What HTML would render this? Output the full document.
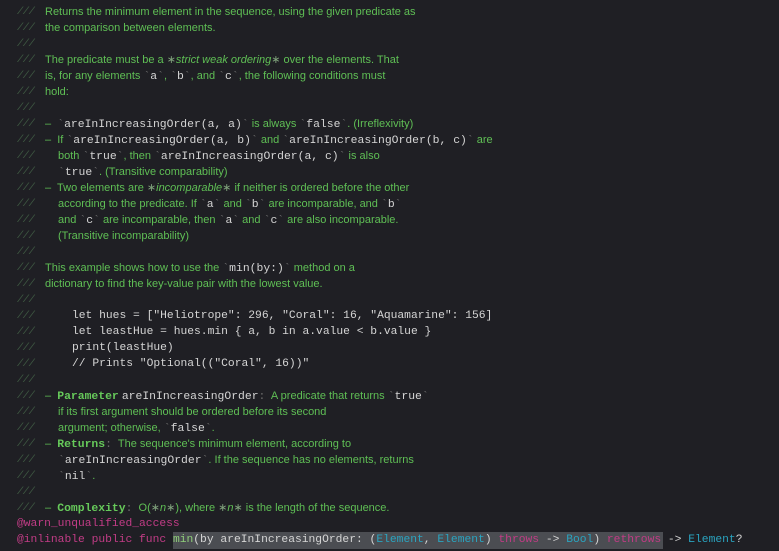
<!DOCTYPE html>
<html><head><meta charset="utf-8"><style>
html,body{margin:0;padding:0;background:#1f1f24;width:779px;height:551px;overflow:hidden}
.l{position:absolute;height:16px;line-height:16px;white-space:pre;font-family:"Liberation Sans",sans-serif;font-size:11px;color:#5fbf55}
.p{position:absolute;left:17px;height:16px;line-height:16px;font-family:"Liberation Mono",monospace;font-size:10.5px;color:#3f5a43;font-style:italic;letter-spacing:-0.5px}
.m{font-family:"Liberation Mono",monospace;font-size:11.4px;color:#d5d5d5}
.t{color:#6b6b6b;font-family:"Liberation Mono",monospace;font-size:11.4px}
.b{font-family:"Liberation Mono",monospace;font-size:11.4px;font-weight:bold;color:#66c95a}
.c{font-family:"Liberation Mono",monospace;font-size:11.3px;color:#d5d5d5}
.i{font-style:italic}
.s{color:#7fa17b}
.k{font-family:"Liberation Mono",monospace;font-size:11.3px;color:#d5d5d5}
.pk{color:#c23c86}.ty{color:#2aa4c0}
</style></head><body>
<div class="p" style="top:4px">///</div><div class="l" style="top:4px;left:45px">Returns the minimum element in the sequence, using the given predicate as</div>
<div class="p" style="top:20px">///</div><div class="l" style="top:20px;left:45px">the comparison between elements.</div>
<div class="p" style="top:36px">///</div>
<div class="p" style="top:52px">///</div><div class="l" style="top:52px;left:45px">The predicate must be a <span class="s">∗</span><span class="i">strict weak ordering</span><span class="s">∗</span> over the elements. That</div>
<div class="p" style="top:68px">///</div><div class="l" style="top:68px;left:45px">is, for any elements <span class="t">`</span><span class="m">a</span><span class="t">`</span>, <span class="t">`</span><span class="m">b</span><span class="t">`</span>, and <span class="t">`</span><span class="m">c</span><span class="t">`</span>, the following conditions must</div>
<div class="p" style="top:84px">///</div><div class="l" style="top:84px;left:45px">hold:</div>
<div class="p" style="top:100px">///</div>
<div class="p" style="top:116px">///</div><div class="l" style="top:116px;left:45px">–  <span class="t">`</span><span class="m">areInIncreasingOrder(a, a)</span><span class="t">`</span> is always <span class="t">`</span><span class="m">false</span><span class="t">`</span>. (Irreflexivity)</div>
<div class="p" style="top:132px">///</div><div class="l" style="top:132px;left:45px">–  If <span class="t">`</span><span class="m">areInIncreasingOrder(a, b)</span><span class="t">`</span> and <span class="t">`</span><span class="m">areInIncreasingOrder(b, c)</span><span class="t">`</span> are</div>
<div class="p" style="top:148px">///</div><div class="l" style="top:148px;left:58px">both <span class="t">`</span><span class="m">true</span><span class="t">`</span>, then <span class="t">`</span><span class="m">areInIncreasingOrder(a, c)</span><span class="t">`</span> is also</div>
<div class="p" style="top:164px">///</div><div class="l" style="top:164px;left:58px"><span class="t">`</span><span class="m">true</span><span class="t">`</span>. (Transitive comparability)</div>
<div class="p" style="top:180px">///</div><div class="l" style="top:180px;left:45px">–  Two elements are <span class="s">∗</span><span class="i">incomparable</span><span class="s">∗</span> if neither is ordered before the other</div>
<div class="p" style="top:196px">///</div><div class="l" style="top:196px;left:58px">according to the predicate. If <span class="t">`</span><span class="m">a</span><span class="t">`</span> and <span class="t">`</span><span class="m">b</span><span class="t">`</span> are incomparable, and <span class="t">`</span><span class="m">b</span><span class="t">`</span></div>
<div class="p" style="top:212px">///</div><div class="l" style="top:212px;left:58px">and <span class="t">`</span><span class="m">c</span><span class="t">`</span> are incomparable, then <span class="t">`</span><span class="m">a</span><span class="t">`</span> and <span class="t">`</span><span class="m">c</span><span class="t">`</span> are also incomparable.</div>
<div class="p" style="top:228px">///</div><div class="l" style="top:228px;left:58px">(Transitive incomparability)</div>
<div class="p" style="top:244px">///</div>
<div class="p" style="top:260px">///</div><div class="l" style="top:260px;left:45px">This example shows how to use the <span class="t">`</span><span class="m">min(by:)</span><span class="t">`</span> method on a</div>
<div class="p" style="top:276px">///</div><div class="l" style="top:276px;left:45px">dictionary to find the key-value pair with the lowest value.</div>
<div class="p" style="top:292px">///</div>
<div class="p" style="top:308px">///</div><div class="l c" style="top:308px;left:72px">let hues = ["Heliotrope": 296, "Coral": 16, "Aquamarine": 156]</div>
<div class="p" style="top:324px">///</div><div class="l c" style="top:324px;left:72px">let leastHue = hues.min { a, b in a.value &lt; b.value }</div>
<div class="p" style="top:340px">///</div><div class="l c" style="top:340px;left:72px">print(leastHue)</div>
<div class="p" style="top:356px">///</div><div class="l c" style="top:356px;left:72px">// Prints "Optional(("Coral", 16))"</div>
<div class="p" style="top:372px">///</div>
<div class="p" style="top:388px">///</div><div class="l" style="top:388px;left:45px">–  <span class="b">Parameter</span> <span class="m">areInIncreasingOrder</span><span class="t">:</span>  A predicate that returns <span class="t">`</span><span class="m">true</span><span class="t">`</span></div>
<div class="p" style="top:404px">///</div><div class="l" style="top:404px;left:58px">if its first argument should be ordered before its second</div>
<div class="p" style="top:420px">///</div><div class="l" style="top:420px;left:58px">argument; otherwise, <span class="t">`</span><span class="m">false</span><span class="t">`</span>.</div>
<div class="p" style="top:436px">///</div><div class="l" style="top:436px;left:45px">–  <span class="b">Returns</span><span class="t">:</span>  The sequence's minimum element, according to</div>
<div class="p" style="top:452px">///</div><div class="l" style="top:452px;left:58px"><span class="t">`</span><span class="m">areInIncreasingOrder</span><span class="t">`</span>. If the sequence has no elements, returns</div>
<div class="p" style="top:468px">///</div><div class="l" style="top:468px;left:58px"><span class="t">`</span><span class="m">nil</span><span class="t">`</span>.</div>
<div class="p" style="top:484px">///</div>
<div class="p" style="top:500px">///</div><div class="l" style="top:500px;left:45px">–  <span class="b">Complexity</span><span class="t">:</span>  O(<span class="s">∗</span><span class="i">n</span><span class="s">∗</span>), where <span class="s">∗</span><span class="i">n</span><span class="s">∗</span> is the length of the sequence.</div>
<div class="l k" style="top:516px;left:17px"><span class="pk">@warn_unqualified_access</span></div>
<div style="position:absolute;left:173px;top:532px;width:490px;height:17px;background:#4b4d52"></div>
<div class="l k" style="top:532px;left:17px"><span class="pk">@inlinable public func </span><span style="color:#8fcf7a">min</span>(by areInIncreasingOrder: (<span class="ty">Element</span>, <span class="ty">Element</span>) <span class="pk">throws</span> -&gt; <span class="ty">Bool</span>) <span class="pk">rethrows</span> -&gt; <span class="ty">Element</span>?</div>
</body></html>
